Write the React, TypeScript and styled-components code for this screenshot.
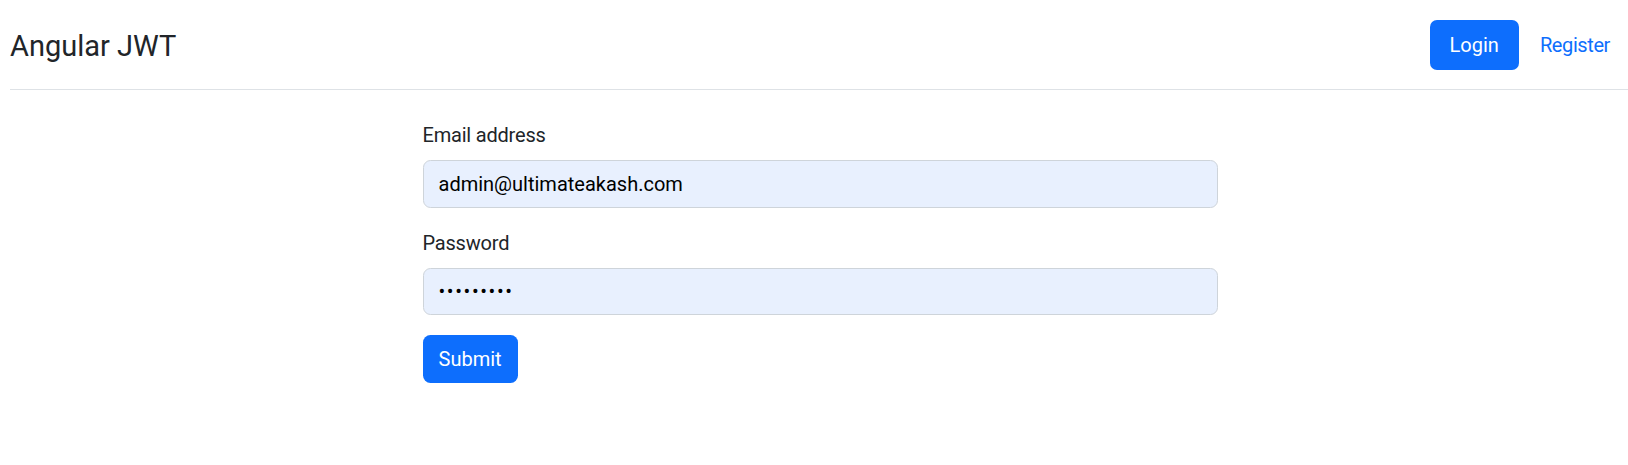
import React from "react";
import styled, { createGlobalStyle } from "styled-components";

const GlobalStyle = createGlobalStyle`
  html, body { margin: 0; padding: 0; background: #fff; }
  body {
    font-family: Roboto, "Noto Sans", "Liberation Sans", sans-serif;
    color: #212529;
    font-size: 20px;
    line-height: 1.5;
  }
  * { box-sizing: border-box; }
`;

const Header = styled.header`
  display: flex;
  align-items: center;
  justify-content: space-between;
  height: 90px;
  margin-left: 10px;
  padding-right: 18px;
  border-bottom: 1px solid #dee2e6;
`;

const Brand = styled.div`
  font-size: 29px;
  line-height: 36px;
  color: #212529;
  padding-top: 2px;
`;

const Nav = styled.nav`
  display: flex;
  align-items: center;
  gap: 21px;
`;

const NavButton = styled.button`
  height: 50px;
  padding: 0 20px;
  border: none;
  border-radius: 7px;
  background: #0d6efd;
  color: #fff;
  font-family: inherit;
  font-size: 20px;
`;

const NavLink = styled.a`
  color: #0d6efd;
  font-size: 20px;
  letter-spacing: -0.4px;
  text-decoration: none;
  cursor: pointer;
`;

const Main = styled.main`
  display: flex;
  justify-content: center;
  margin-top: 30px;
`;

const Form = styled.form`
  width: 795px;
  margin-left: 12px;
  display: flex;
  flex-direction: column;
  gap: 20px;
`;

const Field = styled.div`
  display: flex;
  flex-direction: column;
  gap: 10px;
`;

const Label = styled.label`
  font-size: 20px;
  line-height: 30px;
  letter-spacing: -0.2px;
`;

const Input = styled.input`
  height: 47.5px;
  padding: 0 15px;
  border: 1.25px solid #ced4da;
  border-radius: 7.5px;
  background: #e8f0fe;
  color: #000;
  font-family: inherit;
  font-size: 20px;
  outline: none;
  &[type="password"] { letter-spacing: 1.6px; }
`;

const SubmitButton = styled.button`
  align-self: flex-start;
  height: 47.5px;
  padding: 0 16px;
  border: none;
  border-radius: 7.5px;
  background: #0d6efd;
  color: #fff;
  font-family: inherit;
  font-size: 20px;
`;

export default function App() {
  return (
    <>
      <GlobalStyle />
      <Header>
        <Brand>Angular JWT</Brand>
        <Nav>
          <NavButton type="button">Login</NavButton>
          <NavLink>Register</NavLink>
        </Nav>
      </Header>
      <Main>
        <Form onSubmit={(e) => e.preventDefault()}>
          <Field>
            <Label htmlFor="email">Email address</Label>
            <Input id="email" type="email" defaultValue="admin@ultimateakash.com" />
          </Field>
          <Field>
            <Label htmlFor="password">Password</Label>
            <Input id="password" type="password" defaultValue="123456789" />
          </Field>
          <SubmitButton type="submit">Submit</SubmitButton>
        </Form>
      </Main>
    </>
  );
}
